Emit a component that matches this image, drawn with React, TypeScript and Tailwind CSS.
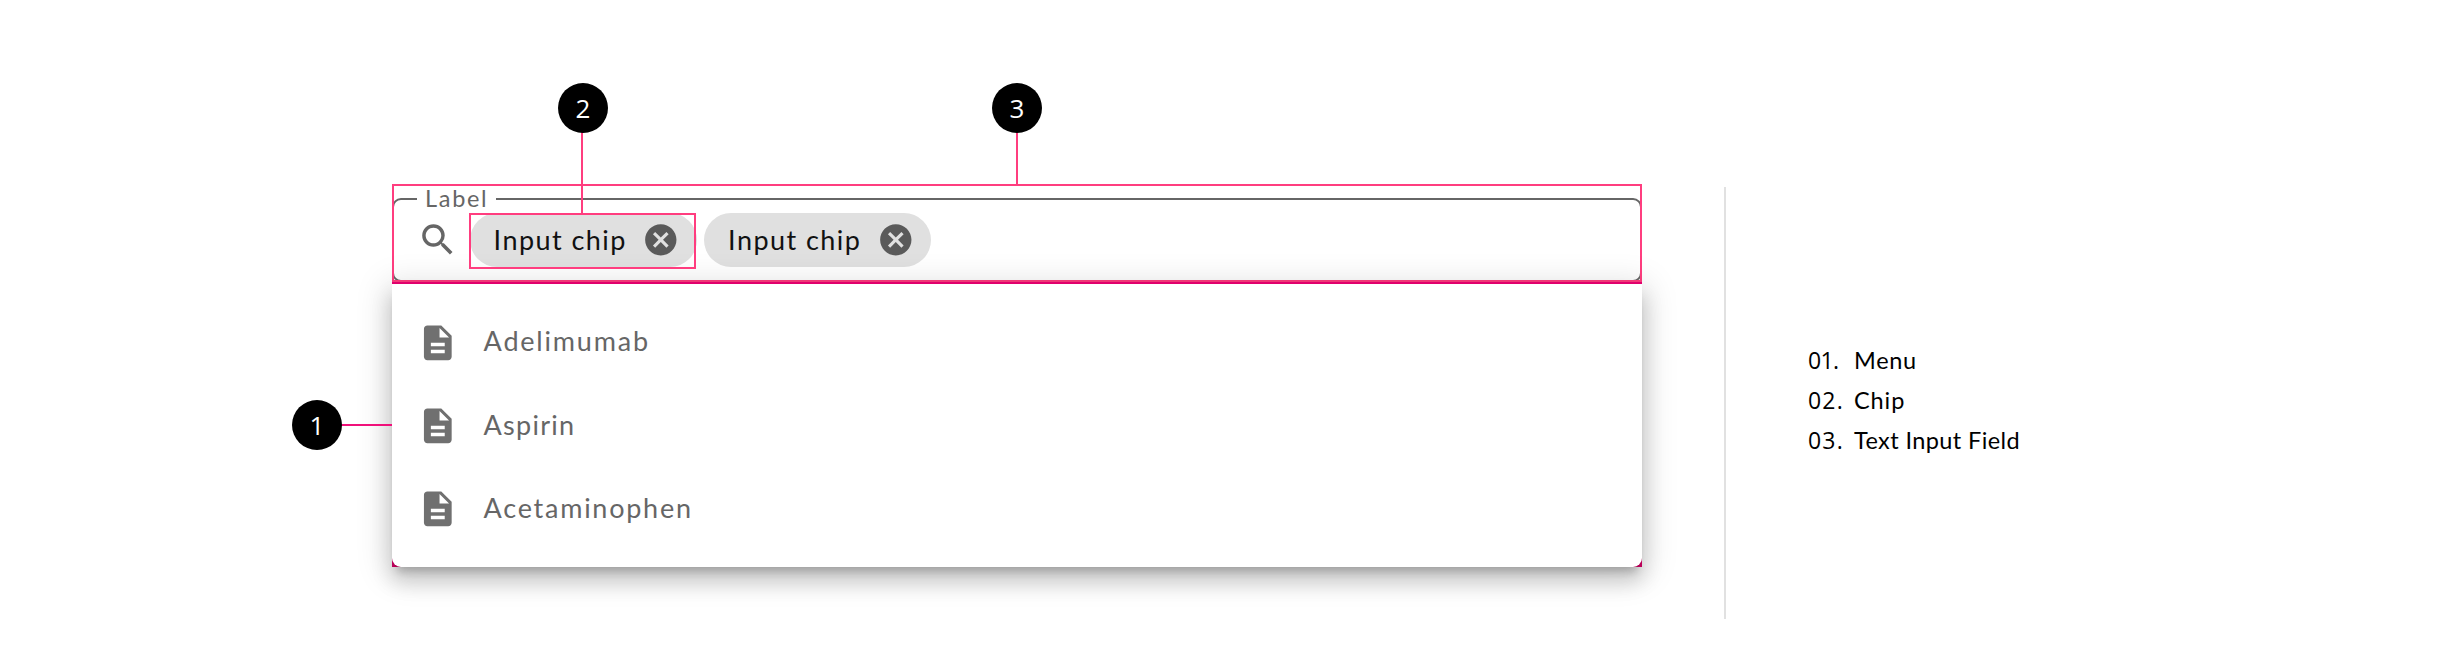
import { MdCancel, MdDescription, MdSearch } from "react-icons/md";

const options = [
  { name: "Adelimumab", spacing: "tracking-[1.8px]" },
  { name: "Aspirin", spacing: "tracking-[1.25px]" },
  { name: "Acetaminophen", spacing: "tracking-[1.75px]" },
];

const legend = [
  { number: "01.", name: "Menu", digits: "tracking-[-0.6px]", spacing: "tracking-[0.7px]" },
  { number: "02.", name: "Chip", digits: "tracking-[1.2px]", spacing: "tracking-[0.9px]" },
  { number: "03.", name: "Text Input Field", digits: "tracking-[1.2px]", spacing: "tracking-[0.4px]" },
];

function Chip() {
  return (
    <div className="flex h-[54px] w-[227px] shrink-0 items-center justify-between rounded-full bg-[#e0e0e0] pr-[17px] pl-[24px]">
      <span className="pb-[1px] text-[27px] leading-none tracking-[1.45px] whitespace-nowrap text-[#111]">
        Input chip
      </span>
      <MdCancel className="size-[37.6px] shrink-0 text-[#5a5a5a]" />
    </div>
  );
}

function Marker({ label, place }: { label: string; place: string }) {
  return (
    <div
      className={`absolute flex size-[50px] items-center justify-center rounded-full bg-black pb-[1px] font-['Open_Sans',sans-serif] text-[26px] leading-none font-medium text-white ${place}`}
    >
      {label}
    </div>
  );
}

export default function App() {
  return (
    <div className="relative flex h-[652px] w-[2450px] overflow-hidden bg-white pl-[392px] font-['Lato',sans-serif]">
      <main className="flex w-[1250px] shrink-0 flex-col pt-[184px]">
        <section className="relative h-[98px] pt-[14px]">
          <fieldset className="h-[84px] rounded-[9px] border-2 border-[#666] pl-[23px]">
            <legend className="h-[2px] w-[79px] pl-[8px] text-[23.5px] leading-[0px] tracking-[1.7px] text-[#666]">
              Label
            </legend>
            <div className="flex items-center pt-[13px]">
              <MdSearch className="size-[41.6px] shrink-0 text-[#666]" />
              <div className="flex gap-[7.5px] pl-[11px]">
                <Chip />
                <Chip />
              </div>
            </div>
          </fieldset>
          <div className="absolute inset-x-0 top-0 h-[100px] border-2 border-b-4 border-[#ff3d7f]" />
        </section>

        <section className="relative bg-[#e0006c] pt-[2px]">
          <ul className="h-[283px] rounded-b-[9px] bg-white pt-[16.7px] shadow-[0_9px_9px_-5px_rgba(0,0,0,0.2),0_14px_20px_2px_rgba(0,0,0,0.14),0_5px_32px_6px_rgba(0,0,0,0.13)]">
            {options.map((option) => (
              <li key={option.name} className="flex h-[83.33px] items-center pl-[25px]">
                <MdDescription className="size-[41.6px] text-[#707070]" />
                <span className={`pb-[3px] pl-[25px] text-[27px] leading-none text-[#666] ${option.spacing}`}>
                  {option.name}
                </span>
              </li>
            ))}
          </ul>
          <div className="absolute inset-x-0 top-0 h-[2px] bg-[#e0006c]" />
        </section>
      </main>

      <aside className="mt-[187px] ml-[82px] h-[432px] border-l-2 border-[#e1e1e1] pt-[154px] pl-[82px]">
        {legend.map((item) => (
          <div key={item.number} className="flex h-[39.8px] items-center text-[23.5px] leading-none text-black">
            <span className={`w-[46px] font-['Open_Sans',sans-serif] text-[23px] leading-none ${item.digits}`}>
              {item.number}
            </span>
            <span className={`whitespace-nowrap ${item.spacing}`}>{item.name}</span>
          </div>
        ))}
      </aside>

      <div className="absolute top-[213px] left-[469px] h-[56px] w-[227px] border-2 border-[#ff3d7f]" />
      <div className="absolute top-[130px] left-[581px] h-[84px] w-[2px] bg-[#ff3d7f]" />
      <div className="absolute top-[130px] left-[1016px] h-[55px] w-[2px] bg-[#ff3d7f]" />
      <div className="absolute top-[424px] left-[340px] h-[2px] w-[52px] bg-[#f0107a]" />
      <Marker label="2" place="top-[83px] left-[558px]" />
      <Marker label="3" place="top-[83px] left-[992px]" />
      <Marker label="1" place="top-[400px] left-[292px]" />
    </div>
  );
}
